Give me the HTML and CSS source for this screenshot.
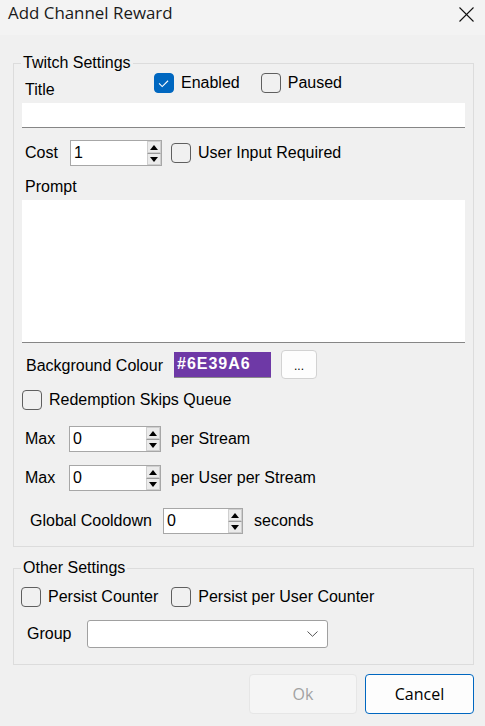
FILE: index.html
```html
<!DOCTYPE html>
<html lang="en">
<head>
<meta charset="utf-8">
<title>Add Channel Reward</title>
<link rel="stylesheet" href="styles.css">
</head>
<body>
<div class="window">
  <header class="titlebar">
    <span class="title">Add Channel Reward</span>
    <svg class="close" viewBox="0 0 15 15" width="15" height="15" aria-hidden="true">
      <line x1="0.5" y1="0.5" x2="14.5" y2="14.5"/>
      <line x1="14.5" y1="0.5" x2="0.5" y2="14.5"/>
    </svg>
  </header>

  <fieldset class="group twitch">
    <legend>Twitch Settings</legend>

    <div class="row row-title">
      <span class="lbl lbl-title">Title</span>
      <label class="check on"><span class="box"><svg viewBox="0 0 20 20" width="18" height="18"><polyline points="4.5,10.5 8,14 14.5,7.5"/></svg></span>Enabled</label>
      <label class="check check-paused"><span class="box"></span>Paused</label>
    </div>
    <div class="textbox title-input"></div>

    <div class="row row-cost">
      <span class="lbl lbl-cost">Cost</span>
      <div class="spin spin-wide"><span class="val">1</span><span class="arrows"><span class="arrow up"></span><span class="arrow down"></span></span></div>
      <label class="check check-input"><span class="box"></span>User Input Required</label>
    </div>

    <div class="lbl lbl-prompt">Prompt</div>
    <div class="textbox prompt"></div>

    <div class="row row-colour">
      <span class="lbl lbl-colour">Background Colour</span>
      <span class="colour">#6E39A6</span>
      <button class="btn-dots" type="button">...</button>
    </div>

    <label class="check check-skip"><span class="box"></span>Redemption Skips Queue</label>

    <div class="row row-max1">
      <span class="lbl lbl-max">Max</span>
      <div class="spin spin-wide"><span class="val">0</span><span class="arrows"><span class="arrow up"></span><span class="arrow down"></span></span></div>
      <span class="lbl suffix">per Stream</span>
    </div>

    <div class="row row-max2">
      <span class="lbl lbl-max">Max</span>
      <div class="spin spin-wide"><span class="val">0</span><span class="arrows"><span class="arrow up"></span><span class="arrow down"></span></span></div>
      <span class="lbl suffix">per User per Stream</span>
    </div>

    <div class="row row-global">
      <span class="lbl lbl-global">Global Cooldown</span>
      <div class="spin spin-narrow"><span class="val">0</span><span class="arrows"><span class="arrow up"></span><span class="arrow down"></span></span></div>
      <span class="lbl suffix suffix-sec">seconds</span>
    </div>
  </fieldset>

  <fieldset class="group other">
    <legend>Other Settings</legend>
    <div class="row row-persist">
      <label class="check"><span class="box"></span>Persist Counter</label>
      <label class="check check-peruser"><span class="box"></span>Persist per User Counter</label>
    </div>
    <div class="row row-group">
      <span class="lbl lbl-group">Group</span>
      <div class="combo">
        <svg class="chevron" viewBox="0 0 11 6" width="11" height="6" aria-hidden="true"><polyline points="0.5,0.5 5.5,5.3 10.5,0.5"/></svg>
      </div>
    </div>
  </fieldset>

  <div class="actions">
    <button class="btn btn-ok" type="button" disabled>Ok</button>
    <button class="btn btn-cancel" type="button">Cancel</button>
  </div>
</div>
</body>
</html>
```

FILE: styles.css
```css
* { box-sizing: border-box; }
html, body { margin: 0; padding: 0; }
body {
  width: 485px;
  height: 726px;
  overflow: hidden;
  background: #f0f0f0;
  color: #000;
  font-family: "Liberation Sans", Arial, sans-serif;
  font-size: 16px;
}

.titlebar {
  height: 35px;
  background: #f3f3f3;
  display: flex;
  align-items: flex-start;
  justify-content: space-between;
  padding-left: 8px;
}
.title {
  font-family: "Open Sans", "Noto Sans", sans-serif;
  font-size: 16.9px;
  line-height: 22px;
  margin-top: 2px;
  color: #1a1a1a;
}
.close {
  margin-top: 7px;
  margin-right: 11px;
  stroke: #111;
  stroke-width: 1.1;
  fill: none;
}

.group {
  margin: 0 11px 0 13px;
  border: 1px solid #dcdcdc;
  padding: 2px 8px 12px 8px;
  min-width: 0;
}
.group legend {
  font-size: 16px;
  line-height: 16px;
  padding: 0 2px;
  margin-left: -1px;
}
.twitch { margin-top: 20px; }
.other { margin-top: 13px; padding: 11px 8px 16px 8px; }

.row { display: flex; align-items: center; }
.lbl { line-height: 18px; white-space: nowrap; flex: none; }

.check {
  display: flex;
  align-items: center;
  line-height: 18px;
  white-space: nowrap;
  flex: none;
}
.box {
  width: 20px;
  height: 20px;
  border: 1px solid #5f5f5f;
  border-radius: 4px;
  margin-right: 7px;
  flex: none;
  display: flex;
  align-items: center;
  justify-content: center;
}
.check.on .box { background: #0067c0; border-color: #0067c0; }
.box svg { fill: none; stroke: #fff; stroke-width: 1.2; }

.row-title { align-items: flex-start; }
.lbl-title { width: 129px; margin-left: 3px; margin-top: 8px; }
.check-paused { margin-left: 21px; }

.textbox { background: #fff; border-bottom: 1px solid #868686; }
.title-input { height: 25px; margin-top: 4px; }

.row-cost { margin-top: 12px; }
.lbl-cost { width: 45px; margin-left: 3px; }
.check-input { margin-left: 9px; }

.spin {
  height: 26px;
  border: 1px solid #a7a7a7;
  background: #fff;
  display: flex;
  align-items: center;
  flex: none;
}
.spin-wide { width: 92px; }
.spin-narrow { width: 80px; }
.spin .val { flex: 1; padding-left: 3px; line-height: 18px; }
.arrows {
  width: 14px;
  height: 24px;
  display: flex;
  flex-direction: column;
  flex: none;
}
.arrow {
  flex: 1;
  background: #ebebeb;
  border: 1px solid #cfcfcf;
  display: flex;
  align-items: center;
  justify-content: center;
}
.arrow::before {
  content: "";
  width: 0;
  height: 0;
  border-left: 4.5px solid transparent;
  border-right: 4.5px solid transparent;
}
.up::before { border-bottom: 5px solid #000; }
.down { border-top-color: #9a9a9a; }
.down::before { border-top: 5px solid #000; }

.lbl-prompt { margin-top: 12px; margin-left: 3px; }
.prompt { height: 143px; margin-top: 4px; }

.row-colour { margin-top: 7px; height: 29px; }
.lbl-colour { width: 148px; margin-left: 4px; margin-top: 3px; }
.colour {
  width: 97px;
  height: 26px;
  background: #6e39a6;
  border-bottom: 1px solid #8a8a8a;
  color: #fff;
  font-weight: bold;
  letter-spacing: 1px;
  line-height: 18px;
  padding: 3px 0 0 3px;
  flex: none;
}
.btn-dots {
  width: 36px;
  height: 29px;
  margin-left: 10px;
  background: #fdfdfd;
  border: 1px solid #d2d2d2;
  border-radius: 4px;
  font-family: "Liberation Sans", Arial, sans-serif;
  font-size: 12px;
  line-height: 14px;
  color: #000;
  padding: 3px 0 0 0;
}

.check-skip { margin-top: 11px; }

.row-max1 { margin-top: 16px; }
.row-max2 { margin-top: 13px; }
.row-global { margin-top: 17px; }
.lbl-max { width: 44px; margin-left: 3px; }
.suffix { margin-left: 10px; }
.lbl-global { width: 133px; margin-left: 8px; }
.suffix-sec { margin-left: 11px; }

.row-persist { margin-left: -1px; }
.check-peruser { margin-left: 13px; }

.row-group { margin-top: 13px; }
.lbl-group { width: 60px; margin-left: 5px; }
.combo {
  width: 241px;
  height: 28px;
  background: #fff;
  border: 1px solid #a0a0a0;
  border-radius: 3px;
  display: flex;
  align-items: center;
  justify-content: flex-end;
  padding-right: 9px;
  flex: none;
}
.chevron { fill: none; stroke: #555; stroke-width: 1; }

.actions {
  margin: 9px 11px 0 0;
  display: flex;
  justify-content: flex-end;
  gap: 8px;
}
.btn {
  height: 40px;
  border-radius: 4px;
  font-family: "Open Sans", "Noto Sans", sans-serif;
  font-size: 16px;
  line-height: 22px;
  padding: 0;
}
.btn-ok {
  width: 108px;
  background: #f5f5f5;
  border: 1px solid #e6e6e6;
  color: #a2a2a2;
}
.btn-cancel {
  width: 109px;
  background: #fdfdfd;
  border: 1px solid #0067c0;
  color: #000;
}
```
